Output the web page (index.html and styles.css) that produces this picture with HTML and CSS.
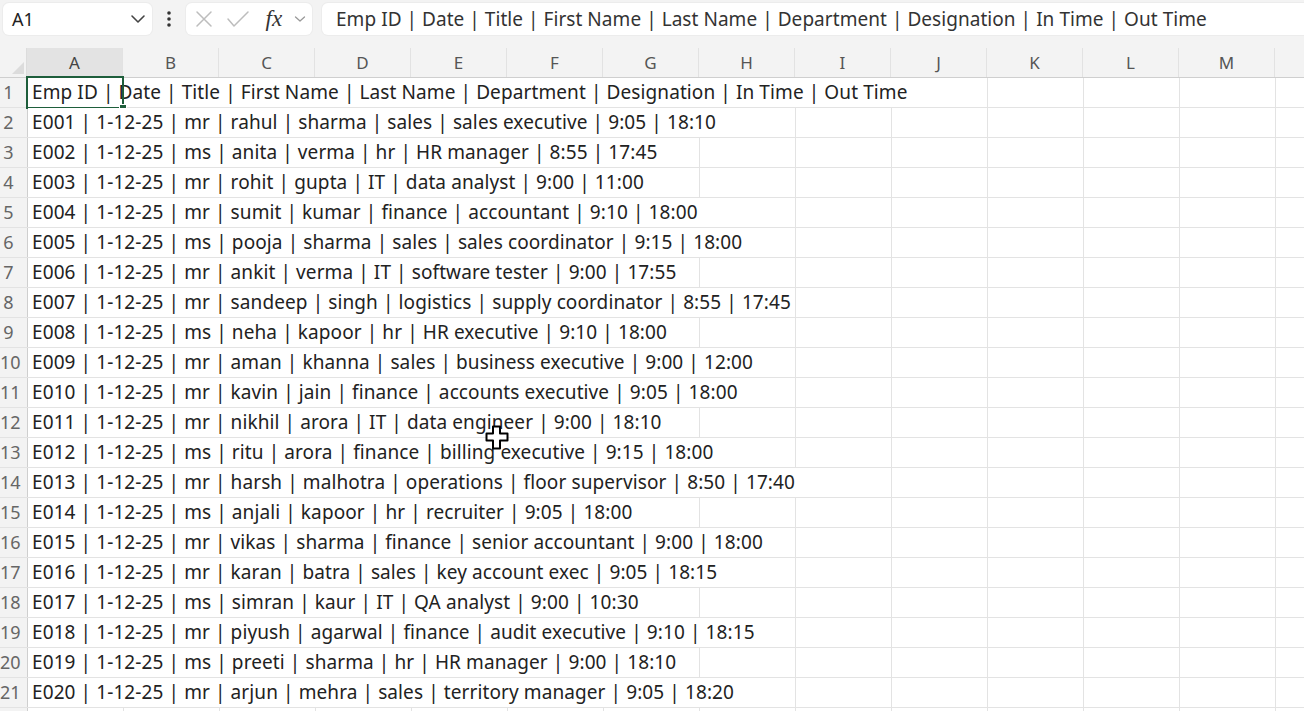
FILE: index.html
```html
<!DOCTYPE html>
<html>
<head>
<meta charset="utf-8">
<link rel="stylesheet" href="styles.css">
</head>
<body>
<div class="topbar">
  <div class="namebox">
    <span class="ref">A1</span>
    <svg class="chev" width="16" height="10" viewBox="0 0 16 10"><path d="M2 2 L8 8 L14 2" fill="none" stroke="#444" stroke-width="1.6" stroke-linecap="round" stroke-linejoin="round"/></svg>
  </div>
  <div class="dots"><svg width="6" height="18" viewBox="0 0 6 18"><circle cx="3" cy="3" r="1.8" fill="#333"/><circle cx="3" cy="9" r="1.8" fill="#333"/><circle cx="3" cy="15" r="1.8" fill="#333"/></svg></div>
  <div class="fxbox">
    <svg width="20" height="20" viewBox="0 0 20 20"><path d="M3 3 L17 17 M17 3 L3 17" stroke="#bdbdbd" stroke-width="1.5" stroke-linecap="round"/></svg>
    <svg width="24" height="20" viewBox="0 0 24 20"><path d="M2 10 L8 17 L22 3" fill="none" stroke="#bdbdbd" stroke-width="1.5" stroke-linecap="round" stroke-linejoin="round"/></svg>
    <span class="fx">fx</span>
    <svg width="12" height="8" viewBox="0 0 12 8"><path d="M1.5 2 L6 6 L10.5 2" fill="none" stroke="#999" stroke-width="1.3" stroke-linecap="round" stroke-linejoin="round"/></svg>
  </div>
  <div class="formula">Emp ID | Date | Title | First Name | Last Name | Department | Designation | In Time | Out Time</div>
</div>

<div class="sheet">
  <div class="colhead">
    <div class="corner"><svg width="12" height="12" viewBox="0 0 12 12"><path d="M12 0 L12 12 L0 12 Z" fill="#dcdcdc"/></svg></div>
    <div class="col sel">A</div><div class="col">B</div><div class="col">C</div><div class="col">D</div><div class="col">E</div><div class="col">F</div><div class="col">G</div><div class="col">H</div><div class="col">I</div><div class="col">J</div><div class="col">K</div><div class="col">L</div><div class="col">M</div><div class="col"></div>
  </div>

  <div class="row"><div class="rh">1</div><div class="cells"><span class="txt">Emp ID | Date | Title | First Name | Last Name | Department | Designation | In Time | Out Time</span><div class="selbox"><div class="handle"></div></div></div></div>
  <div class="row"><div class="rh">2</div><div class="cells"><span class="txt">E001 | 1-12-25 | mr | rahul | sharma | sales | sales executive | 9:05 | 18:10</span></div></div>
  <div class="row"><div class="rh">3</div><div class="cells"><span class="txt">E002 | 1-12-25 | ms | anita | verma | hr | HR manager | 8:55 | 17:45</span></div></div>
  <div class="row"><div class="rh">4</div><div class="cells"><span class="txt">E003 | 1-12-25 | mr | rohit | gupta | IT | data analyst | 9:00 | 11:00</span></div></div>
  <div class="row"><div class="rh">5</div><div class="cells"><span class="txt">E004 | 1-12-25 | mr | sumit | kumar | finance | accountant | 9:10 | 18:00</span></div></div>
  <div class="row"><div class="rh">6</div><div class="cells"><span class="txt">E005 | 1-12-25 | ms | pooja | sharma | sales | sales coordinator | 9:15 | 18:00</span></div></div>
  <div class="row"><div class="rh">7</div><div class="cells"><span class="txt">E006 | 1-12-25 | mr | ankit | verma | IT | software tester | 9:00 | 17:55</span></div></div>
  <div class="row"><div class="rh">8</div><div class="cells"><span class="txt">E007 | 1-12-25 | mr | sandeep | singh | logistics | supply coordinator | 8:55 | 17:45</span></div></div>
  <div class="row"><div class="rh">9</div><div class="cells"><span class="txt">E008 | 1-12-25 | ms | neha | kapoor | hr | HR executive | 9:10 | 18:00</span></div></div>
  <div class="row"><div class="rh">10</div><div class="cells"><span class="txt">E009 | 1-12-25 | mr | aman | khanna | sales | business executive | 9:00 | 12:00</span></div></div>
  <div class="row"><div class="rh">11</div><div class="cells"><span class="txt">E010 | 1-12-25 | mr | kavin | jain | finance | accounts executive | 9:05 | 18:00</span></div></div>
  <div class="row"><div class="rh">12</div><div class="cells"><span class="txt">E011 | 1-12-25 | mr | nikhil | arora | IT | data engineer | 9:00 | 18:10</span></div></div>
  <div class="row"><div class="rh">13</div><div class="cells"><span class="txt">E012 | 1-12-25 | ms | ritu | arora | finance | billing executive | 9:15 | 18:00</span></div></div>
  <div class="row"><div class="rh">14</div><div class="cells"><span class="txt">E013 | 1-12-25 | mr | harsh | malhotra | operations | floor supervisor | 8:50 | 17:40</span></div></div>
  <div class="row"><div class="rh">15</div><div class="cells"><span class="txt">E014 | 1-12-25 | ms | anjali | kapoor | hr | recruiter | 9:05 | 18:00</span></div></div>
  <div class="row"><div class="rh">16</div><div class="cells"><span class="txt">E015 | 1-12-25 | mr | vikas | sharma | finance | senior accountant | 9:00 | 18:00</span></div></div>
  <div class="row"><div class="rh">17</div><div class="cells"><span class="txt">E016 | 1-12-25 | mr | karan | batra | sales | key account exec | 9:05 | 18:15</span></div></div>
  <div class="row"><div class="rh">18</div><div class="cells"><span class="txt">E017 | 1-12-25 | ms | simran | kaur | IT | QA analyst | 9:00 | 10:30</span></div></div>
  <div class="row"><div class="rh">19</div><div class="cells"><span class="txt">E018 | 1-12-25 | mr | piyush | agarwal | finance | audit executive | 9:10 | 18:15</span></div></div>
  <div class="row"><div class="rh">20</div><div class="cells"><span class="txt">E019 | 1-12-25 | ms | preeti | sharma | hr | HR manager | 9:00 | 18:10</span></div></div>
  <div class="row"><div class="rh">21</div><div class="cells"><span class="txt">E020 | 1-12-25 | mr | arjun | mehra | sales | territory manager | 9:05 | 18:20</span></div></div>
  <div class="row"><div class="rh"></div><div class="cells"></div></div>
</div>

<svg class="cursor" width="24" height="26" viewBox="0 0 24 26"><path d="M8 1.5 H15 V8.5 H22.5 V15.5 H15 V23.5 H8 V15.5 H1.5 V8.5 H8 Z" fill="#fff" stroke="#000" stroke-width="2" stroke-linejoin="round"/></svg>
</body>
</html>
```

FILE: styles.css
```css
html, body {
  margin: 0;
  padding: 0;
  background: #f3f3f3;
  overflow: hidden;
}
body {
  width: 1304px;
  height: 711px;
  font-family: "Noto Sans", "Open Sans", sans-serif;
  color: #222;
}
.topbar {
  display: flex;
  align-items: center;
  height: 37px;
  padding: 0 0 0 3px;
  gap: 0;
}
.namebox, .fxbox, .formula {
  background: #fff;
  border-radius: 6px;
  height: 32px;
  box-shadow: 0 0 0 1px #ececec;
  box-sizing: border-box;
  display: flex;
  align-items: center;
}
.namebox {
  width: 149px;
  padding: 0 6px 0 9px;
  justify-content: space-between;
  font-size: 18px;
  color: #222;
}
.dots {
  width: 34px;
  display: flex;
  justify-content: center;
  align-items: center;
}
.fxbox {
  width: 126px;
  padding: 0 6px 0 8px;
  justify-content: space-between;
}
.fx {
  font-family: "Liberation Serif", serif;
  font-style: italic;
  font-size: 23px;
  color: #333;
  margin-left: 4px;
}
.formula {
  flex: 1;
  margin-left: 10px;
  padding-left: 14px;
  font-size: 19px;
  letter-spacing: 0.05px;
  white-space: nowrap;
  overflow: hidden;
  border-radius: 6px 0 0 6px;
  color: #333;
}
.sheet {
  margin-top: 11px;
  background: #fff;
}
.colhead {
  display: flex;
  height: 30px;
  background: #f3f3f3;
  border-bottom: 1px solid #cfcfcf;
  box-sizing: border-box;
  overflow: hidden;
}
.corner {
  width: 27px;
  border-right: 1px solid #dcdcdc;
  display: flex;
  align-items: flex-end;
  justify-content: flex-end;
  padding: 0 2px 3px 0;
  box-sizing: border-box;
  flex: none;
}
.col {
  width: 96px;
  flex: none;
  box-sizing: border-box;
  border-right: 1px solid #e2e2e2;
  text-align: center;
  line-height: 29px;
  font-size: 17px;
  color: #555;
}
.col.sel {
  background: #e3e3e3;
  color: #444;
}
.row {
  display: flex;
  height: 30px;
  box-sizing: border-box;
  border-bottom: 1px solid #e3e3e3;
}
.rh {
  width: 28px;
  flex: none;
  box-sizing: border-box;
  background: #f3f3f3;
  border-right: 1px solid #cfcfcf;
  padding-right: 10px;
  text-align: center;
  font-size: 18px;
  line-height: 29px;
  color: #666;
}
.cells {
  flex: 1;
  position: relative;
  background: repeating-linear-gradient(to right, transparent 0 95px, #e3e3e3 95px 96px);
  white-space: nowrap;
  line-height: 29px;
}
.txt {
  background: #fff;
  padding: 0 3px 0 4px;
  font-size: 19px;
  letter-spacing: 0.1px;
  color: #222;
  display: inline-block;
  height: 29px;
}
.selbox {
  position: absolute;
  left: -2px;
  top: -2px;
  width: 98px;
  height: 33px;
  box-sizing: border-box;
  border: 2px solid #1e5e3b;
}
.handle {
  position: absolute;
  right: -5px;
  bottom: -5px;
  width: 6px;
  height: 6px;
  background: #1e5e3b;
  border: 1px solid #fff;
}
.cursor {
  position: absolute;
  left: 485px;
  top: 425px;
}
```
